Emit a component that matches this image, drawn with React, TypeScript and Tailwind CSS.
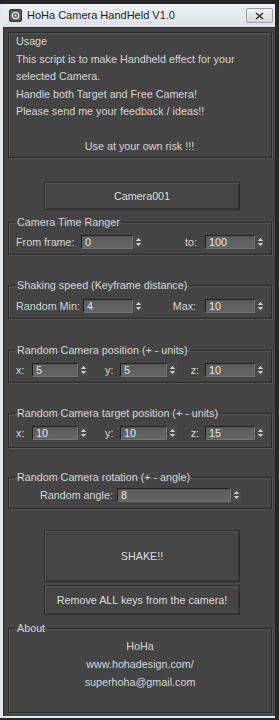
import React from "react";

const Arrows = () => (
  <div className="w-[9px] h-[14px] flex flex-col items-center justify-center gap-[2px] bg-[#4a4a4a]">
    <svg width="5" height="3" viewBox="0 0 5 3"><path d="M0 3 L2.5 0 L5 3 Z" fill="#d8d8d8" /></svg>
    <svg width="5" height="3" viewBox="0 0 5 3"><path d="M0 0 L2.5 3 L5 0 Z" fill="#d8d8d8" /></svg>
  </div>
);

function Spinner({ value, className }: { value: string; className: string }) {
  return (
    <div className={`flex h-[14px] gap-[1px] ${className}`}>
      <div className="flex-1 h-[14px] bg-gradient-to-b from-[#5a5a5a] to-[#666666] border border-[#1f1f1f] border-r-[#737373] border-b-[#737373] text-[#e6e6e6] text-[10.75px] leading-[12px] pl-[3px]">
        {value}
      </div>
      <Arrows />
    </div>
  );
}

function Group({ label, className, children }: { label: string; className: string; children: React.ReactNode }) {
  return (
    <fieldset className={`w-[264px] border border-[#2a2a2a] shadow-[inset_1px_1px_0_#575757,1px_1px_0_#575757] ${className}`}>
      <legend className="ml-[6px] px-[2px] text-[10.75px] leading-[14px] text-[#d4d4d4]">{label}</legend>
      {children}
    </fieldset>
  );
}

const btn =
  "w-[196px] ml-[36px] flex items-center justify-center border border-[#2b2b2b] shadow-[inset_1px_1px_0_#585858,inset_-1px_-1px_0_#3a3a3a] bg-[#454545] text-[10.75px] text-[#dedede]";

export default function App() {
  return (
    <div className="w-[279px] h-[720px] bg-[#262626] pt-[4px] pr-[4px] pb-[2px] flex flex-col font-['Liberation_Sans',Arial,sans-serif]">
      <div className="flex-1 flex flex-col bg-[#e4e8ed] pl-[3px] pb-[2px]">
        <div className="h-[23px] flex items-center pl-[6px] pr-[2px] bg-gradient-to-b from-[#eef1f5] to-[#dde2e8]">
          <div className="w-[13px] h-[13px] rounded-[2px] bg-[#5a5a5a] border border-[#333] flex items-center justify-center">
            <svg width="9" height="9" viewBox="0 0 9 9">
              <circle cx="4.5" cy="4.5" r="3.2" fill="none" stroke="#e8e8e8" strokeWidth="1.3" />
              <circle cx="4.5" cy="4.5" r="1.1" fill="#e8e8e8" />
            </svg>
          </div>
          <span className="ml-[5px] text-[11px] text-[#1e1e1e]">HoHa Camera HandHeld V1.0</span>
          <div className="ml-auto w-[27px] h-[15px] rounded-[2px] border border-[#9a9ea4] bg-gradient-to-b from-[#f2f2f2] to-[#d6d8db] flex items-center justify-center">
            <svg width="9" height="8" viewBox="0 0 9 8">
              <path d="M1 1 L8 7 M8 1 L1 7" stroke="#333" strokeWidth="1.6" />
            </svg>
          </div>
        </div>
        <div className="flex-1 bg-[#444444] border-l border-t border-[#2c2c2c] pl-[4px] pr-[3px] pt-[4px] flex flex-col text-[#d6d6d6]">
          <div className="w-[264px] h-[126px] border border-[#2a2a2a] shadow-[inset_1px_1px_0_#575757,1px_1px_0_#575757] pl-[7px] text-[10.75px] leading-[17.5px] text-[#d6d6d6]">
            <div>Usage</div>
            <div>This script is to make Handheld effect for your</div>
            <div>selected Camera.</div>
            <div>Handle both Target and Free Camera!</div>
            <div>Please send me your feedback / ideas!!</div>
            <div>&nbsp;</div>
            <div className="text-center pr-[8px]">Use at your own risk !!!</div>
          </div>

          <div className={`${btn} h-[28px] mt-[24px]`}>Camera001</div>

          <Group label="Camera Time Ranger" className="h-[40px] mt-[5px]">
            <div className="flex items-center mt-[6px] pl-[7px] pr-[6px] text-[10.75px] leading-[14px]">
              <span className="w-[65px]">From frame:</span>
              <Spinner value="0" className="w-[62px]" />
              <span className="ml-auto mr-[8px]">to:</span>
              <Spinner value="100" className="w-[60px]" />
            </div>
          </Group>

          <Group label="Shaking speed (Keyframe distance)" className="h-[41px] mt-[23px]">
            <div className="flex items-center mt-[7px] pl-[7px] pr-[6px] text-[10.75px] leading-[14px]">
              <span className="w-[67px]">Random Min:</span>
              <Spinner value="4" className="w-[60px]" />
              <span className="ml-auto mr-[9px]">Max:</span>
              <Spinner value="10" className="w-[60px]" />
            </div>
          </Group>

          <Group label="Random Camera position (+ - units)" className="h-[40px] mt-[24px]">
            <div className="flex items-center mt-[6px] pl-[7px] pr-[6px] text-[10.75px] leading-[14px]">
              <span className="w-[16px]">x:</span>
              <Spinner value="5" className="w-[56px]" />
              <span className="ml-[17px] w-[15px]">y:</span>
              <Spinner value="5" className="w-[57px]" />
              <span className="ml-auto mr-[6px]">z:</span>
              <Spinner value="10" className="w-[60px]" />
            </div>
          </Group>

          <Group label="Random Camera target position (+ - units)" className="h-[42px] mt-[23px]">
            <div className="flex items-center mt-[6px] pl-[7px] pr-[6px] text-[10.75px] leading-[14px]">
              <span className="w-[16px]">x:</span>
              <Spinner value="10" className="w-[56px]" />
              <span className="ml-[17px] w-[15px]">y:</span>
              <Spinner value="10" className="w-[57px]" />
              <span className="ml-auto mr-[6px]">z:</span>
              <Spinner value="15" className="w-[60px]" />
            </div>
          </Group>

          <Group label="Random Camera rotation (+ - angle)" className="h-[39px] mt-[22px]">
            <div className="flex items-center mt-[4px] pl-[31px] text-[10.75px] leading-[14px]">
              <span className="w-[77px]">Random angle:</span>
              <Spinner value="8" className="w-[124px]" />
            </div>
          </Group>

          <div className={`${btn} h-[52px] mt-[21px]`}>SHAKE!!</div>
          <div className={`${btn} h-[30px] mt-[3px]`}>Remove ALL keys from the camera!</div>

          <Group label="About" className="h-[92px] mt-[6px]">
            <div className="flex flex-col items-center mt-[2px] text-[10.75px] leading-[18px] text-[#d6d6d6]">
              <span>HoHa</span>
              <span>www.hohadesign.com/</span>
              <span>superhoha@gmail.com</span>
            </div>
          </Group>
        </div>
      </div>
    </div>
  );
}
